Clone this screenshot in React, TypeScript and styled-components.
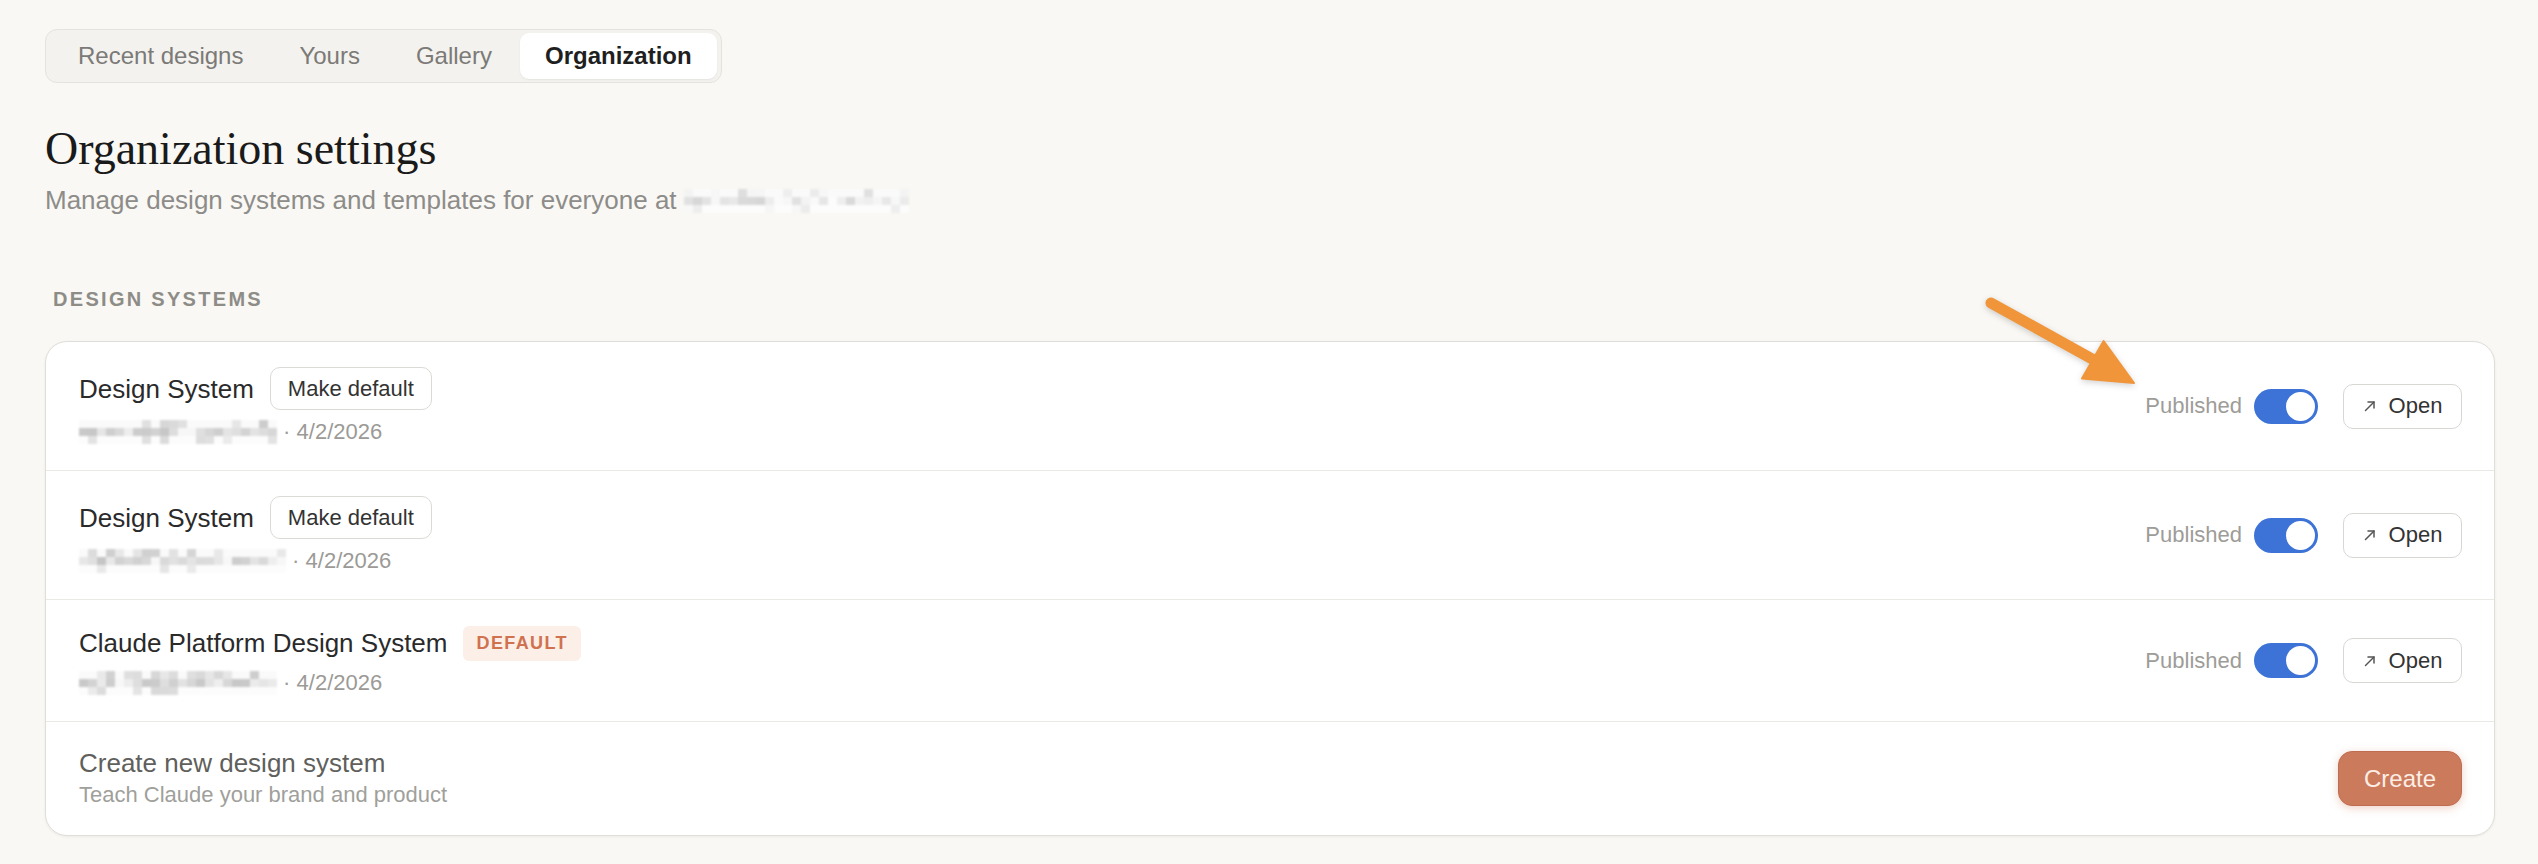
import React from "react";
import styled, { createGlobalStyle } from "styled-components";

const GlobalStyle = createGlobalStyle`
  html, body {
    margin: 0;
    padding: 0;
    background: #f9f8f4;
  }
  body {
    font-family: "Liberation Sans", Arial, sans-serif;
    color: #2b2b2b;
  }
  * {
    box-sizing: border-box;
  }
`;

const tabs = ["Recent designs", "Yours", "Gallery", "Organization"];

const systems = [
  { id: 0, name: "Design System", isDefault: false, owner: 198, seed: 7 },
  { id: 1, name: "Design System", isDefault: false, owner: 204, seed: 23 },
  { id: 2, name: "Claude Platform Design System", isDefault: true, owner: 198, seed: 51 },
];

// pixelated redaction, like the blurred emails in the screenshot
const Redacted = ({ width, seed, light }: { width: number; seed: number; light?: boolean }) => {
  let s = seed;
  const rand = () => {
    s = (s * 9301 + 49297) % 233280;
    return s / 233280;
  };
  const count = Math.round(width / 9);
  const cols = [];
  for (let i = 0; i < count; i++) {
    const base = light ? 212 : 196;
    const top = rand() > 0.55 ? base + 8 + Math.round(rand() * 30) : 250;
    const mid = rand() > 0.15 ? base + Math.round(rand() * 42) : 247;
    const low = rand() > 0.8 ? base + 18 + Math.round(rand() * 22) : 252;
    cols.push({ top, mid, low });
  }
  return (
    <RedactBox>
      {cols.map((c, i) => (
        <RedactCol key={i}>
          <RedactCell style={{ background: `rgb(${c.top},${c.top},${c.top})` }} />
          <RedactCell style={{ background: `rgb(${c.mid},${c.mid},${c.mid})` }} />
          <RedactCell style={{ background: `rgb(${c.low},${c.low},${c.low})` }} />
        </RedactCol>
      ))}
    </RedactBox>
  );
};

const ArrowUpRight = () => (
  <svg width="14" height="14" viewBox="0 0 14 14" fill="none" stroke="#555" strokeWidth="1.5" strokeLinecap="round" strokeLinejoin="round">
    <path d="M2.5 11.5 L11 3" />
    <path d="M5 3 H11 V9" />
  </svg>
);

const App = () => {
  return (
    <>
      <GlobalStyle />
      <Page>
        <TabBar>
          {tabs.map(tab => (
            <Tab key={tab} $active={tab === "Organization"}>
              {tab}
            </Tab>
          ))}
        </TabBar>

        <Heading>Organization settings</Heading>
        <Subtitle>
          Manage design systems and templates for everyone at&nbsp;
          <Redacted width={225} seed={91} light />
        </Subtitle>

        <SectionLabel>DESIGN SYSTEMS</SectionLabel>

        <Card>
          {systems.map(system => (
            <Row key={system.id}>
              <Info>
                <TitleLine>
                  <Title>{system.name}</Title>
                  {system.isDefault ? <Badge>DEFAULT</Badge> : <GhostButton type="button">Make default</GhostButton>}
                </TitleLine>
                <Meta>
                  <Redacted width={system.owner} seed={system.seed} />
                  <span>&nbsp;· 4/2/2026</span>
                </Meta>
              </Info>
              <Actions>
                <StatusLabel>Published</StatusLabel>
                <Toggle>
                  <Knob />
                </Toggle>
                <OpenButton type="button">
                  <ArrowUpRight />
                  Open
                </OpenButton>
              </Actions>
            </Row>
          ))}
          <Row>
            <Info>
              <CreateTitle>Create new design system</CreateTitle>
              <CreateHint>Teach Claude your brand and product</CreateHint>
            </Info>
            <CreateButton type="button">Create</CreateButton>
          </Row>
        </Card>

        <Annotation width="170" height="100" viewBox="0 0 170 100">
          <path d="M11 8 L114 65" stroke="#f0953a" strokeWidth="11" strokeLinecap="round" />
          <polygon points="154,88 102,83.5 123.6,46" fill="#f0953a" stroke="#f0953a" strokeWidth="2" strokeLinejoin="round" />
        </Annotation>
      </Page>
    </>
  );
};

const Page = styled.div`
  position: relative;
  display: flex;
  flex-direction: column;
  min-height: 864px;
  padding: 29px 43px 0 45px;
`;

const TabBar = styled.div`
  align-self: flex-start;
  display: flex;
  height: 54px;
  padding: 3px 4px;
  background: #f3f2ee;
  border: 1px solid #e5e3de;
  border-radius: 12px;
`;

const Tab = styled.div<{ $active?: boolean }>`
  display: flex;
  align-items: center;
  padding: 0 ${p => (p.$active ? 25 : 28)}px;
  border-radius: 9px;
  font-size: 24px;
  font-weight: ${p => (p.$active ? 700 : 400)};
  color: ${p => (p.$active ? "#1f1f1f" : "#7b7a77")};
  background: ${p => (p.$active ? "#ffffff" : "transparent")};
  box-shadow: ${p => (p.$active ? "0 1px 2px rgba(0, 0, 0, 0.06)" : "none")};
`;

const Heading = styled.h1`
  margin: 38px 0 0;
  font-family: "Liberation Serif", "Times New Roman", serif;
  font-weight: 400;
  font-size: 46px;
  line-height: 55px;
  color: #1a1a1a;
`;

const Subtitle = styled.div`
  display: flex;
  align-items: center;
  margin-top: 7px;
  font-size: 26px;
  line-height: 35px;
  color: #8d8c89;
`;

const RedactBox = styled.span`
  display: inline-flex;
  filter: blur(1px);
`;

const RedactCol = styled.span`
  display: flex;
  flex-direction: column;
  width: 9px;
`;

const RedactCell = styled.span`
  display: block;
  width: 9px;
  height: 8px;
`;

const SectionLabel = styled.div`
  margin: 69px 0 0 8px;
  font-size: 20px;
  font-weight: 700;
  letter-spacing: 2.3px;
  line-height: 24px;
  color: #8e8c87;
`;

const Card = styled.div`
  margin-top: 30px;
  background: #ffffff;
  border: 1px solid #e0ded9;
  border-radius: 22px;
  box-shadow: 0 1px 3px rgba(0, 0, 0, 0.06);
  overflow: hidden;
`;

const Row = styled.div`
  display: flex;
  align-items: center;
  justify-content: space-between;
  padding: 25px 32px 25px 33px;
  border-bottom: 1px solid #ebe9e5;

  &:last-child {
    border-bottom: none;
  }
`;

const Info = styled.div`
  display: flex;
  flex-direction: column;
`;

const TitleLine = styled.div`
  display: flex;
  align-items: center;
  gap: 16px;
  min-height: 36px;
`;

const Title = styled.div`
  font-size: 26px;
  line-height: 36px;
  color: #2a2a2a;
`;

const GhostButton = styled.button`
  display: flex;
  align-items: center;
  height: 43px;
  padding: 0 17px;
  background: #ffffff;
  border: 1px solid #dcdad6;
  border-radius: 10px;
  font-family: inherit;
  font-size: 22px;
  color: #333333;
  cursor: pointer;
`;

const Badge = styled.div`
  display: flex;
  align-items: center;
  height: 35px;
  padding: 0 13px;
  background: #fcefe8;
  border-radius: 6px;
  font-size: 18px;
  font-weight: 700;
  letter-spacing: 1.4px;
  color: #d0714f;
`;

const Meta = styled.div`
  display: flex;
  align-items: center;
  margin-top: 9px;
  font-size: 22px;
  line-height: 26px;
  color: #9b9a96;
`;

const Actions = styled.div`
  display: flex;
  align-items: center;
`;

const StatusLabel = styled.span`
  margin-right: 12px;
  font-size: 22px;
  color: #9d9c98;
`;

const Toggle = styled.div`
  display: flex;
  justify-content: flex-end;
  align-items: center;
  width: 64px;
  height: 35px;
  padding: 3px;
  background: #3d73d6;
  border-radius: 18px;
`;

const Knob = styled.div`
  width: 29px;
  height: 29px;
  border-radius: 50%;
  background: #ffffff;
`;

const OpenButton = styled.button`
  display: flex;
  align-items: center;
  justify-content: center;
  gap: 12px;
  width: 119px;
  height: 45px;
  margin-left: 25px;
  background: #ffffff;
  border: 1px solid #d9d7d3;
  border-radius: 10px;
  font-family: inherit;
  font-size: 22px;
  color: #333333;
  cursor: pointer;
`;

const CreateTitle = styled.div`
  font-size: 26px;
  line-height: 33px;
  color: #605f5c;
`;

const CreateHint = styled.div`
  font-size: 22px;
  line-height: 30px;
  color: #a09f9b;
`;

const CreateButton = styled.button`
  width: 124px;
  height: 55px;
  background: #cc7a5c;
  border: 1px solid #bf6d50;
  border-radius: 14px;
  box-shadow: 0 2px 8px rgba(204, 122, 92, 0.35);
  font-family: inherit;
  font-size: 24px;
  color: #fdeee5;
  cursor: pointer;
`;

const Annotation = styled.svg`
  position: absolute;
  left: 1980px;
  top: 295px;
  filter: drop-shadow(0 2px 3px rgba(0, 0, 0, 0.18));
`;

export default App;
